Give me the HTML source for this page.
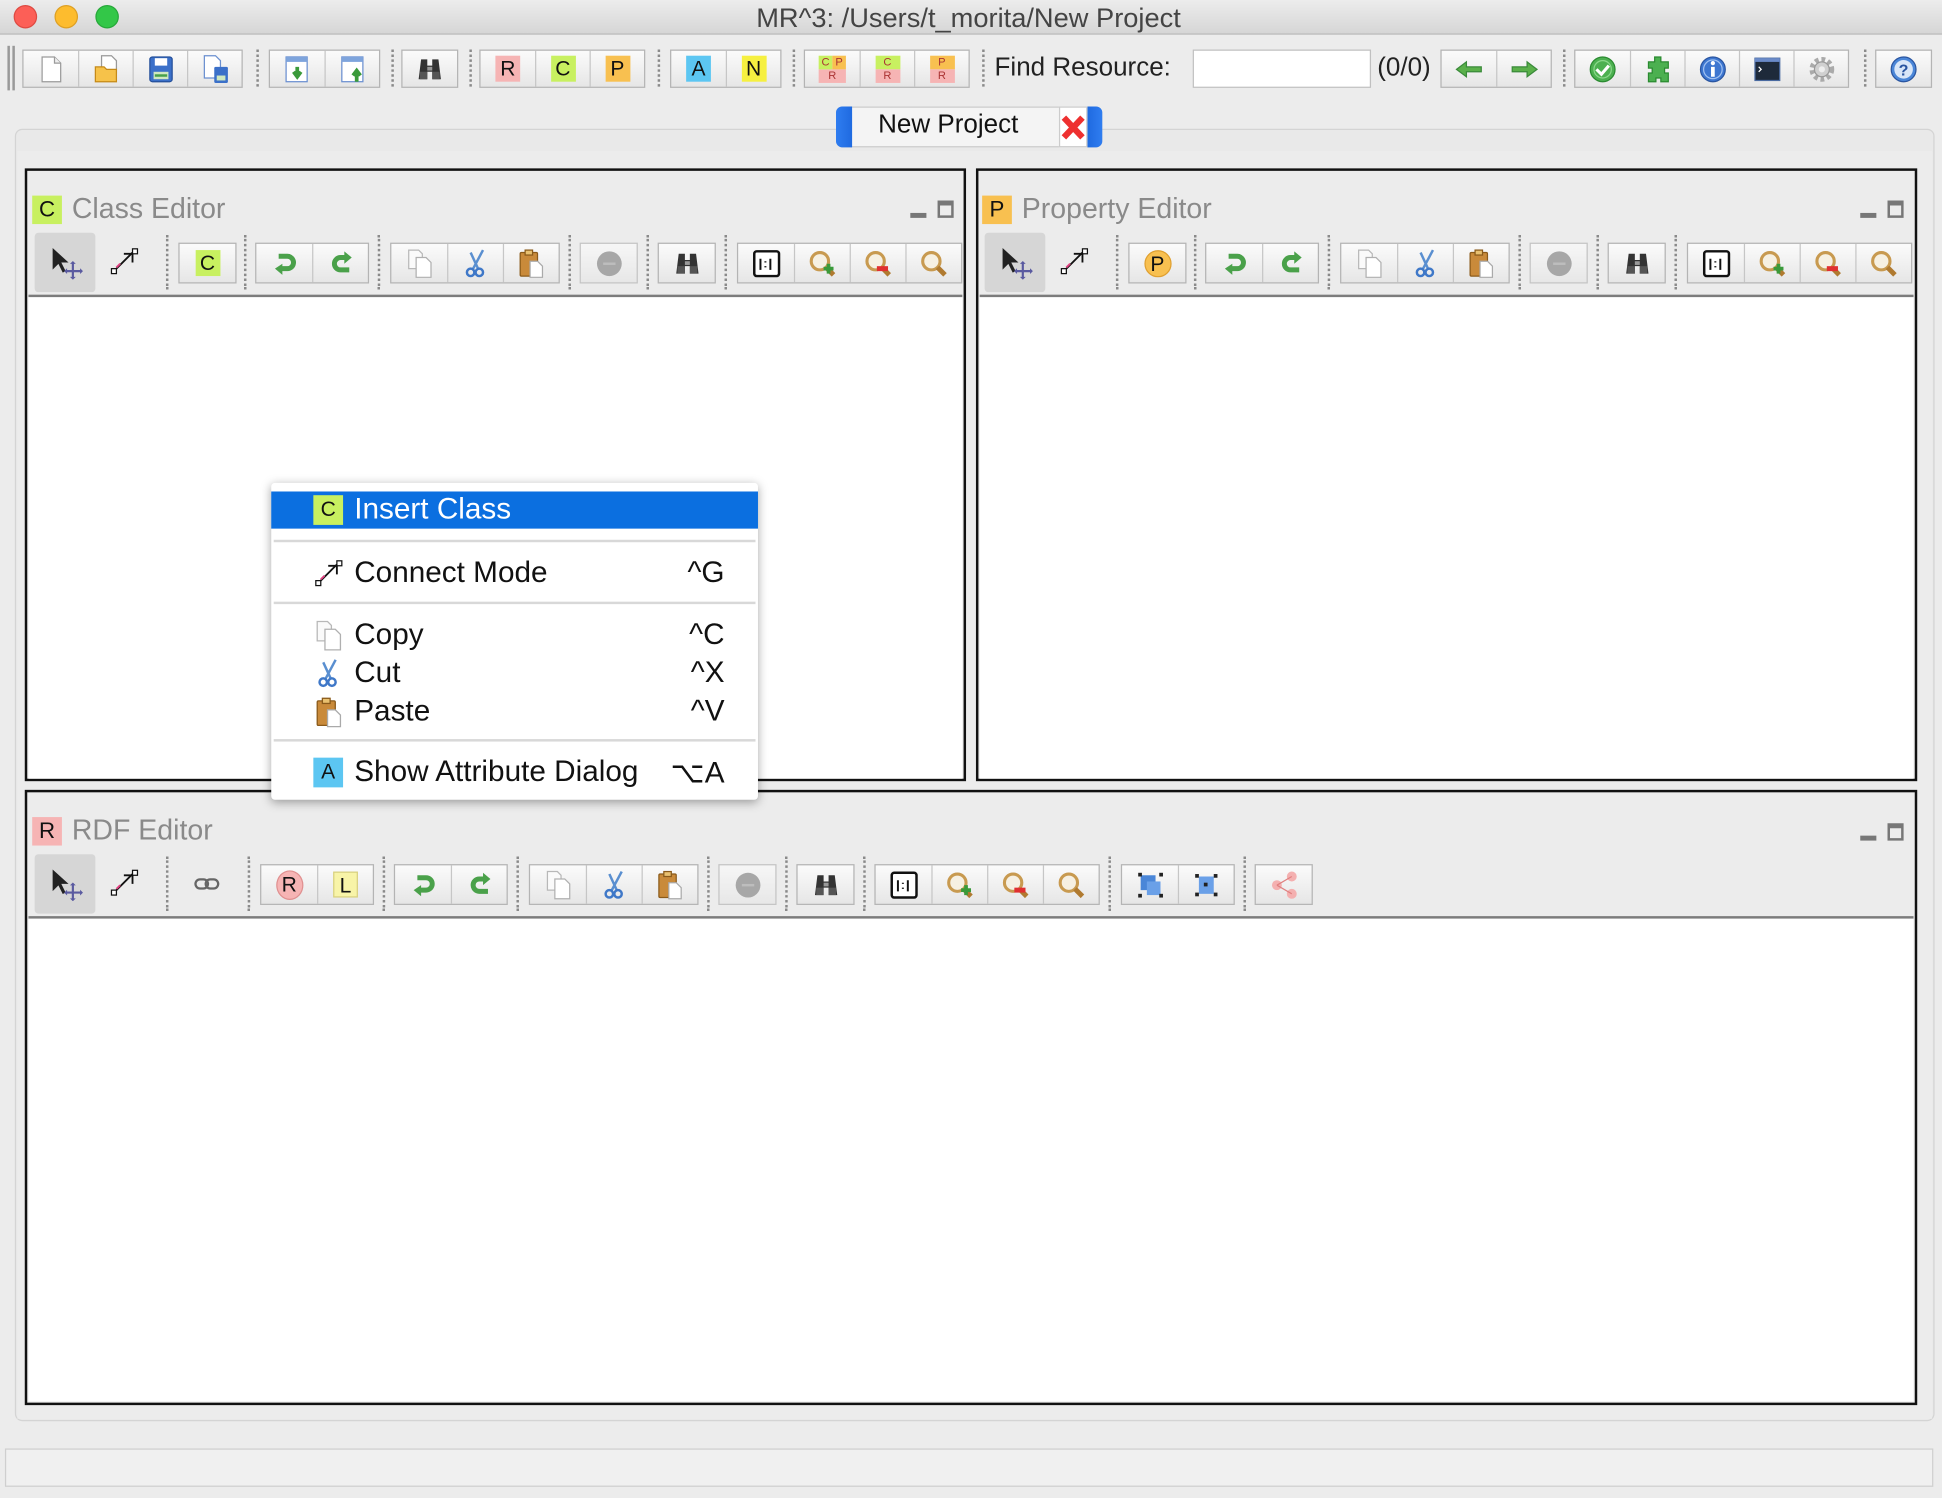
<!DOCTYPE html>
<html><head><meta charset="utf-8"><style>
*{box-sizing:border-box;margin:0;padding:0}
html,body{width:1942px;height:1498px;overflow:hidden;background:#ececec}
#root{position:absolute;left:0;top:0;width:1568px;height:1210px;transform:scale(1.23852,1.2380);transform-origin:0 0;font-family:"Liberation Sans",sans-serif;background:#ececec}
.a{position:absolute}
.grp{position:absolute;display:flex;border:1px solid #b4b4b4;background:linear-gradient(#fbfbfb,#e6e6e6)}
.grp .b{width:44px;display:flex;align-items:center;justify-content:center;border-left:1px solid #c6c6c6}
.grp .b:first-child{border-left:none}
.tb .b{height:29px}
.pt .b{height:31px;width:45px}
.sep{position:absolute;width:0;border-left:2px dotted #8a8a8a}
.badge{display:inline-block;width:20px;height:21px;font-size:17px;line-height:21px;text-align:center;color:#111}
svg{display:block}
.panel{position:absolute;border:2px solid #111;background:#ececec}
.canvas{position:absolute;background:#fff;border-top:2px solid #7c7c7c}
.ptitle{position:absolute;font-size:23px;color:#8a8a8a}
.ptitle .badge{margin-right:8px;vertical-align:1px;font-size:18px;width:24px;height:23px;line-height:23px}
.selbg{position:absolute;background:#d6d6d6;border-radius:3px;width:49px;height:48px;display:flex;align-items:center;justify-content:center}
.menu{position:absolute;left:219px;top:390px;width:393px;height:256px;background:#fff;box-shadow:0 2px 8px rgba(0,0,0,.35);border-radius:3px;font-size:24px;color:#111}
.mi{position:absolute;left:0;width:393px;height:30px}
.mi .t{position:absolute;left:67px;top:1px}
.mi .k{position:absolute;right:27px;top:1px}
.mi .ic{position:absolute;left:34px;top:3px}
.msep{position:absolute;left:2px;right:2px;height:2px;background:#d8d8d8}
</style></head><body><div id="root">
<svg width="0" height="0" style="position:absolute">
<defs>
<symbol id="doc" viewBox="0 0 24 24"><path d="M5 2h10l5 5v15H5z" fill="#fff" stroke="#9a9a9a"/><path d="M15 2v5h5" fill="#eee" stroke="#9a9a9a"/></symbol>
<symbol id="open" viewBox="0 0 24 24"><path d="M8 1h8l4 4v10H8z" fill="#fff" stroke="#999"/><path d="M3 10h7l2 2h8v10H3z" fill="#f6c24a" stroke="#c58a18"/></symbol>
<symbol id="save" viewBox="0 0 24 24"><rect x="3" y="2" width="18" height="20" rx="2" fill="#3b70c9" stroke="#244f9a"/><rect x="7" y="3" width="10" height="6" fill="#fff"/><rect x="6" y="14" width="12" height="6" fill="#cfe8c0"/><rect x="7" y="16" width="10" height="2" fill="#46a04a"/></symbol>
<symbol id="saveas" viewBox="0 0 24 24"><path d="M3 1h9l4 4v14H3z" fill="#fff" stroke="#6a8fd0"/><rect x="11" y="10" width="11" height="13" rx="1" fill="#3b70c9"/><rect x="13" y="17" width="7" height="4" fill="#cfe8c0"/></symbol>
<symbol id="imp" viewBox="0 0 24 24"><rect x="3" y="2" width="17" height="20" fill="#fff" stroke="#6a8fd0"/><rect x="3" y="2" width="17" height="4" fill="#7ea4dc"/><path d="M12 10v7M9 14l3 4 3-4" stroke="#3a9a3a" stroke-width="3" fill="none"/></symbol>
<symbol id="exp" viewBox="0 0 24 24"><rect x="3" y="2" width="17" height="20" fill="#fff" stroke="#6a8fd0"/><rect x="3" y="2" width="17" height="4" fill="#7ea4dc"/><path d="M15 22v-8M12 17l3-4 3 4" stroke="#3a9a3a" stroke-width="3" fill="none"/></symbol>
<symbol id="bino" viewBox="0 0 24 24"><path d="M5 4h5v5h4V4h5l2 16h-7v-6h-4v6H3z" fill="#333"/><rect x="4" y="14" width="6" height="6" fill="#555"/><rect x="14" y="14" width="6" height="6" fill="#555"/><rect x="10" y="10" width="4" height="3" fill="#999"/></symbol>
<symbol id="undo" viewBox="0 0 24 24"><path d="M7 6h7a5 5 0 0 1 0 10H9" fill="none" stroke="#4aa14a" stroke-width="4"/><path d="M10 12l-6 4 6 5z" fill="#4aa14a"/></symbol>
<symbol id="redo" viewBox="0 0 24 24"><path d="M18 7h-6a5 5 0 0 0 0 10h7" fill="none" stroke="#4aa14a" stroke-width="4"/><path d="M15 2l6 5-6 5z" fill="#4aa14a"/></symbol>
<symbol id="copy" viewBox="0 0 24 24"><path d="M3 1h8l3 3v12H3z" fill="#fafafa" stroke="#b8b8b8"/><path d="M9 7h8l4 4v12H9z" fill="#fff" stroke="#b0b0b0"/></symbol>
<symbol id="cut" viewBox="0 0 24 24"><path d="M10 16L18 1M14 16L8 3" stroke="#5a8fd0" stroke-width="2"/><circle cx="8" cy="19" r="3" fill="none" stroke="#3f78c8" stroke-width="2"/><circle cx="15" cy="19" r="3" fill="none" stroke="#3f78c8" stroke-width="2"/></symbol>
<symbol id="paste" viewBox="0 0 24 24"><rect x="3" y="3" width="14" height="19" rx="1" fill="#c98a3a" stroke="#8a5a1a"/><rect x="7" y="1" width="6" height="4" fill="#e8c070" stroke="#8a5a1a"/><path d="M11 10h6l4 4v9H11z" fill="#fff" stroke="#aaa"/></symbol>
<symbol id="del" viewBox="0 0 24 24"><circle cx="12" cy="12" r="10" fill="#8a8a8a"/><rect x="7" y="11" width="10" height="2" fill="#aaa"/></symbol>
<symbol id="zin" viewBox="0 0 24 24"><circle cx="10" cy="10" r="7" fill="#f6f0e2" stroke="#c89a50" stroke-width="2.5"/><path d="M15 15l6 6" stroke="#b07a30" stroke-width="4"/><path d="M13 16h8M17 12v8" stroke="#3a9a3a" stroke-width="3"/></symbol>
<symbol id="zout" viewBox="0 0 24 24"><circle cx="10" cy="10" r="7" fill="#f6f0e2" stroke="#c89a50" stroke-width="2.5"/><path d="M15 15l6 6" stroke="#b07a30" stroke-width="4"/><rect x="11" y="14" width="9" height="4" fill="#e03030"/></symbol>
<symbol id="zoom" viewBox="0 0 24 24"><circle cx="10" cy="10" r="7" fill="#f6f0e2" stroke="#c89a50" stroke-width="2.5"/><path d="M15 15l6 6" stroke="#b07a30" stroke-width="4"/></symbol>
<symbol id="sel" viewBox="0 0 24 24"><path d="M3 2v15l4-4 3 6 2-1-3-6h5z" fill="#222"/><path d="M17 12v11M12 18h11" stroke="#5a5aa0" stroke-width="1.5"/><path d="M17 11l-2 2h4zM17 24l-2-2h4zM11 18l2-2v4zM24 18l-2-2v4z" fill="#5a5aa0"/></symbol>
<symbol id="conn" viewBox="0 0 24 24"><path d="M4 20L19 5" stroke="#111" stroke-width="1.5"/><path d="M12 6h7v7" fill="none" stroke="#111" stroke-width="1.5"/><rect x="2" y="18" width="4" height="4" fill="#fff" stroke="#111"/><rect x="19" y="2" width="4" height="4" fill="#fff" stroke="#111"/><path d="M6 17l3-3" stroke="#e04080" stroke-width="1.5"/></symbol>
<symbol id="one" viewBox="0 0 24 24"><rect x="2" y="2" width="20" height="20" rx="2" fill="#fff" stroke="#111" stroke-width="2"/><path d="M7 8v9M15 8v9M11 10v1M11 14v1" stroke="#111" stroke-width="1.6"/></symbol>
<symbol id="larr" viewBox="0 0 24 24"><path d="M2 12l8-6v4h12v4H10v4z" fill="#5ab04a" stroke="#3a8a3a"/></symbol>
<symbol id="rarr" viewBox="0 0 24 24"><path d="M22 12l-8-6v4H2v4h12v4z" fill="#5ab04a" stroke="#3a8a3a"/></symbol>
<symbol id="chk" viewBox="0 0 24 24"><circle cx="12" cy="12" r="10" fill="#4cb050" stroke="#2a8a30"/><circle cx="12" cy="12" r="7" fill="none" stroke="#8ad88a"/><path d="M7 12l4 4 6-7" stroke="#fff" stroke-width="2.5" fill="none"/></symbol>
<symbol id="puz" viewBox="0 0 24 24"><path d="M9 2h5v4h6v5h-3v4h3v7h-6v-3h-4v3H4v-7h3v-4H4V6h5z" fill="#4cb050" stroke="#2a8a30"/></symbol>
<symbol id="info" viewBox="0 0 24 24"><circle cx="12" cy="12" r="10" fill="#3d76d0" stroke="#2a55a0"/><circle cx="12" cy="12" r="7.5" fill="none" stroke="#9fc0f0"/><rect x="10.5" y="10" width="3" height="8" fill="#fff"/><circle cx="12" cy="7" r="1.7" fill="#fff"/></symbol>
<symbol id="term" viewBox="0 0 24 24"><rect x="2" y="3" width="20" height="18" fill="#1e2a3a" stroke="#4a6aa0"/><rect x="2" y="3" width="20" height="3" fill="#6a8ac8"/><path d="M5 10l2 2-2 2" stroke="#fff" fill="none"/></symbol>
<symbol id="gear" viewBox="0 0 24 24"><circle cx="12" cy="12" r="8" fill="none" stroke="#aaa" stroke-width="4" stroke-dasharray="3 2.3"/><circle cx="12" cy="12" r="6" fill="#d0d0d0" stroke="#999"/><circle cx="12" cy="12" r="2.5" fill="#eee"/></symbol>
<symbol id="help" viewBox="0 0 24 24"><circle cx="12" cy="12" r="10" fill="#4a86d8" stroke="#2a55a0"/><circle cx="12" cy="12" r="7.5" fill="#d8e6f8"/><text x="12" y="17" font-size="13" font-weight="bold" text-anchor="middle" fill="#2a55a0" font-family="Liberation Sans">?</text></symbol>
<symbol id="link" viewBox="0 0 24 24"><rect x="2" y="8" width="11" height="8" rx="4" fill="none" stroke="#666" stroke-width="2"/><rect x="11" y="8" width="11" height="8" rx="4" fill="none" stroke="#666" stroke-width="2"/></symbol>
<symbol id="grp1" viewBox="0 0 24 24"><rect x="4" y="4" width="12" height="12" fill="#4a86d8"/><rect x="9" y="9" width="11" height="11" fill="#6aa0e8"/><rect x="2" y="2" width="3" height="3" fill="#222"/><rect x="19" y="2" width="3" height="3" fill="#222"/><rect x="2" y="19" width="3" height="3" fill="#222"/><rect x="19" y="19" width="3" height="3" fill="#222"/></symbol>
<symbol id="grp2" viewBox="0 0 24 24"><rect x="6" y="5" width="12" height="14" fill="#6aa0e8"/><rect x="3" y="3" width="3" height="3" fill="#222"/><rect x="18" y="3" width="3" height="3" fill="#222"/><rect x="3" y="18" width="3" height="3" fill="#222"/><rect x="18" y="18" width="3" height="3" fill="#222"/><rect x="10" y="10" width="3" height="3" fill="#222"/></symbol>
<symbol id="tree" viewBox="0 0 24 24"><circle cx="6" cy="12" r="4" fill="#f4b0b0"/><circle cx="18" cy="5" r="4" fill="#f4b0b0"/><circle cx="18" cy="19" r="4" fill="#f4b0b0"/><path d="M6 12L18 5M6 12l12 7" stroke="#e08080"/></symbol>
</defs></svg>

<div class="a" style="left:0;top:0;width:1568px;height:28px;background:linear-gradient(#ececec,#d6d6d6);border-bottom:1px solid #b8b8b8"></div>
<div class="a" style="left:11px;top:4px;width:19px;height:19px;border-radius:50%;background:#fc5f57;border:1px solid #de4a42"></div>
<div class="a" style="left:44px;top:4px;width:19px;height:19px;border-radius:50%;background:#fdbc2e;border:1px solid #dea024"></div>
<div class="a" style="left:77px;top:4px;width:19px;height:19px;border-radius:50%;background:#33c748;border:1px solid #27a83a"></div>
<div class="a" style="left:0;top:2px;width:1564px;text-align:center;font-size:22px;color:#444">MR^3: /Users/t_morita/New Project</div>

<div class="a" style="left:6px;top:37px;width:2px;height:36px;background:#999"></div>
<div class="a" style="left:10px;top:37px;width:2px;height:36px;background:#999"></div>
<div class="grp tb" style="left:18px;top:40px"><div class="b"><svg width="24" height="24"><use href="#doc"/></svg></div><div class="b"><svg width="24" height="24"><use href="#open"/></svg></div><div class="b"><svg width="24" height="24"><use href="#save"/></svg></div><div class="b"><svg width="24" height="24"><use href="#saveas"/></svg></div></div>
<div class="sep" style="left:207px;top:40px;height:30px"></div>
<div class="grp tb" style="left:217px;top:40px"><div class="b"><svg width="24" height="24"><use href="#imp"/></svg></div><div class="b"><svg width="24" height="24"><use href="#exp"/></svg></div></div>
<div class="sep" style="left:316px;top:40px;height:30px"></div>
<div class="grp tb" style="left:324px;top:40px"><div class="b"><svg width="24" height="24"><use href="#bino"/></svg></div></div>
<div class="sep" style="left:379px;top:40px;height:30px"></div>
<div class="grp tb" style="left:387px;top:40px"><div class="b"><span class="badge" style="background:#f6b4b4">R</span></div><div class="b"><span class="badge" style="background:#c8f060">C</span></div><div class="b"><span class="badge" style="background:#f8c050">P</span></div></div>
<div class="sep" style="left:531px;top:40px;height:30px"></div>
<div class="grp tb" style="left:541px;top:40px"><div class="b"><span class="badge" style="background:#5cc6f2">A</span></div><div class="b"><span class="badge" style="background:#f6f040">N</span></div></div>
<div class="sep" style="left:640px;top:40px;height:30px"></div>
<div class="grp tb" style="left:649px;top:40px">
<div class="b"><div style="width:22px;height:22px;font-size:9px;line-height:11px;text-align:center;color:#a33"><div style="display:flex"><span style="background:#c8f060;width:11px">C</span><span style="background:#f8c050;width:11px">P</span></div><div style="background:#f6b4b4">R</div></div></div>
<div class="b"><div style="width:20px;height:22px;font-size:9px;line-height:11px;text-align:center;color:#a33"><div style="background:#c8f060">C</div><div style="background:#f6b4b4">R</div></div></div>
<div class="b"><div style="width:20px;height:22px;font-size:9px;line-height:11px;text-align:center;color:#a33"><div style="background:#f8c050">P</div><div style="background:#f6b4b4">R</div></div></div></div>
<div class="sep" style="left:793px;top:40px;height:30px"></div>
<div class="a" style="left:803px;top:43px;font-size:21px;color:#222">Find Resource:</div>
<div class="a" style="left:963px;top:40px;width:144px;height:31px;background:#fff;border:1px solid #c0c0c0"></div>
<div class="a" style="left:1112px;top:43px;font-size:21px;color:#222">(0/0)</div>
<div class="grp tb" style="left:1163px;top:40px"><div class="b"><svg width="26" height="24"><use href="#larr"/></svg></div><div class="b"><svg width="26" height="24"><use href="#rarr"/></svg></div></div>
<div class="sep" style="left:1262px;top:40px;height:30px"></div>
<div class="grp tb" style="left:1271px;top:40px"><div class="b"><svg width="24" height="24"><use href="#chk"/></svg></div><div class="b"><svg width="24" height="24"><use href="#puz"/></svg></div><div class="b"><svg width="24" height="24"><use href="#info"/></svg></div><div class="b"><svg width="24" height="24"><use href="#term"/></svg></div><div class="b"><svg width="24" height="24"><use href="#gear"/></svg></div></div>
<div class="sep" style="left:1505px;top:40px;height:30px"></div>
<div class="grp tb" style="left:1514px;top:40px"><div class="b"><svg width="24" height="24"><use href="#help"/></svg></div></div>

<div class="a" style="left:12px;top:104px;width:1550px;height:1044px;border:1px solid #d4d4d4;border-radius:6px;background:#e9e9e9"></div>
<div class="a" style="left:14px;top:122px;width:1546px;height:1024px;background:#ececec"></div>
<div class="a" style="left:675px;top:86px;width:215px;height:33px;background:#f4f4f4;border:1px solid #ccc;border-radius:5px"></div>
<div class="a" style="left:675px;top:86px;width:13px;height:33px;background:linear-gradient(90deg,#2f7df0,#1f6ae0);border-radius:5px 0 0 5px"></div>
<div class="a" style="left:878px;top:86px;width:12px;height:33px;background:linear-gradient(90deg,#1f6ae0,#2f7df0);border-radius:0 5px 5px 0"></div>
<div class="a" style="left:709px;top:89px;font-size:21px;color:#111">New Project</div>
<div class="a" style="left:855px;top:86px;width:23px;height:33px;background:#fff;border:1px solid #ccc"></div>
<svg class="a" style="left:856px;top:92px" width="21" height="22"><path d="M3 3l15 16M18 3L3 19" stroke="#ee3030" stroke-width="5"/></svg>

<div class="panel" style="left:20px;top:136px;width:760px;height:495px"></div>
<div class="ptitle" style="left:26px;top:155px"><span class="badge" style="background:#c8f060">C</span>Class Editor</div>
<div class="a" style="left:735px;top:172px;width:13px;height:4px;background:#777"></div>
<div class="a" style="left:757px;top:162px;width:13px;height:14px;border:2px solid #777;border-top-width:4px"></div>
<div class="selbg" style="left:28px;top:188px"><svg width="28" height="28"><use href="#sel"/></svg></div>
<svg class="a" style="left:88px;top:199px" width="24" height="24"><use href="#conn"/></svg>
<div class="sep" style="left:134px;top:190px;height:44px"></div>
<div class="grp pt" style="left:144px;top:196px"><div class="b"><span class="badge" style="background:#c8f060">C</span></div></div>
<div class="sep" style="left:197px;top:190px;height:44px"></div>
<div class="grp pt" style="left:206px;top:196px"><div class="b"><svg width="24" height="24"><use href="#undo"/></svg></div><div class="b"><svg width="24" height="24"><use href="#redo"/></svg></div></div>
<div class="sep" style="left:305px;top:190px;height:44px"></div>
<div class="grp pt" style="left:315px;top:196px"><div class="b"><svg width="24" height="24"><use href="#copy"/></svg></div><div class="b"><svg width="24" height="24"><use href="#cut"/></svg></div><div class="b"><svg width="24" height="24"><use href="#paste"/></svg></div></div>
<div class="sep" style="left:459px;top:190px;height:44px"></div>
<div class="grp pt" style="left:468px;top:196px;opacity:.7"><div class="b"><svg width="24" height="24"><use href="#del"/></svg></div></div>
<div class="sep" style="left:522px;top:190px;height:44px"></div>
<div class="grp pt" style="left:531px;top:196px"><div class="b"><svg width="24" height="24"><use href="#bino"/></svg></div></div>
<div class="sep" style="left:585px;top:190px;height:44px"></div>
<div class="grp pt" style="left:595px;top:196px"><div class="b"><svg width="24" height="24"><use href="#one"/></svg></div><div class="b"><svg width="24" height="24"><use href="#zin"/></svg></div><div class="b"><svg width="24" height="24"><use href="#zout"/></svg></div><div class="b"><svg width="24" height="24"><use href="#zoom"/></svg></div></div>
<div class="canvas" style="left:23px;top:238px;width:754px;height:391px"></div>

<div class="panel" style="left:788px;top:136px;width:760px;height:495px"></div>
<div class="ptitle" style="left:793px;top:155px"><span class="badge" style="background:#f8c050">P</span>Property Editor</div>
<div class="a" style="left:1502px;top:172px;width:13px;height:4px;background:#777"></div>
<div class="a" style="left:1524px;top:162px;width:13px;height:14px;border:2px solid #777;border-top-width:4px"></div>
<div class="selbg" style="left:795px;top:188px"><svg width="28" height="28"><use href="#sel"/></svg></div>
<svg class="a" style="left:855px;top:199px" width="24" height="24"><use href="#conn"/></svg>
<div class="sep" style="left:901px;top:190px;height:44px"></div>
<div class="grp pt" style="left:911px;top:196px"><div class="b"><span class="badge" style="background:#f8c050;border-radius:50%;width:22px;height:22px;line-height:22px;border:1px solid #e0a030">P</span></div></div>
<div class="sep" style="left:964px;top:190px;height:44px"></div>
<div class="grp pt" style="left:973px;top:196px"><div class="b"><svg width="24" height="24"><use href="#undo"/></svg></div><div class="b"><svg width="24" height="24"><use href="#redo"/></svg></div></div>
<div class="sep" style="left:1072px;top:190px;height:44px"></div>
<div class="grp pt" style="left:1082px;top:196px"><div class="b"><svg width="24" height="24"><use href="#copy"/></svg></div><div class="b"><svg width="24" height="24"><use href="#cut"/></svg></div><div class="b"><svg width="24" height="24"><use href="#paste"/></svg></div></div>
<div class="sep" style="left:1226px;top:190px;height:44px"></div>
<div class="grp pt" style="left:1235px;top:196px;opacity:.7"><div class="b"><svg width="24" height="24"><use href="#del"/></svg></div></div>
<div class="sep" style="left:1289px;top:190px;height:44px"></div>
<div class="grp pt" style="left:1298px;top:196px"><div class="b"><svg width="24" height="24"><use href="#bino"/></svg></div></div>
<div class="sep" style="left:1352px;top:190px;height:44px"></div>
<div class="grp pt" style="left:1362px;top:196px"><div class="b"><svg width="24" height="24"><use href="#one"/></svg></div><div class="b"><svg width="24" height="24"><use href="#zin"/></svg></div><div class="b"><svg width="24" height="24"><use href="#zout"/></svg></div><div class="b"><svg width="24" height="24"><use href="#zoom"/></svg></div></div>
<div class="canvas" style="left:791px;top:238px;width:754px;height:391px"></div>

<div class="panel" style="left:20px;top:638px;width:1528px;height:497px"></div>
<div class="ptitle" style="left:26px;top:657px"><span class="badge" style="background:#f6b4b4">R</span>RDF Editor</div>
<div class="a" style="left:1502px;top:675px;width:13px;height:4px;background:#777"></div>
<div class="a" style="left:1524px;top:665px;width:13px;height:14px;border:2px solid #777;border-top-width:4px"></div>
<div class="selbg" style="left:28px;top:690px"><svg width="28" height="28"><use href="#sel"/></svg></div>
<svg class="a" style="left:88px;top:701px" width="24" height="24"><use href="#conn"/></svg>
<div class="sep" style="left:134px;top:692px;height:44px"></div>
<svg class="a" style="left:156px;top:703px" width="22" height="22"><use href="#link"/></svg>
<div class="sep" style="left:200px;top:692px;height:44px"></div>
<div class="grp pt" style="left:210px;top:698px"><div class="b"><span class="badge" style="background:#f6b4b4;border-radius:50%;width:22px;height:24px;border:1px solid #e09090">R</span></div><div class="b"><span class="badge" style="background:#f8f4a8;border:1px solid #d8d080">L</span></div></div>
<div class="sep" style="left:309px;top:692px;height:44px"></div>
<div class="grp pt" style="left:318px;top:698px"><div class="b"><svg width="24" height="24"><use href="#undo"/></svg></div><div class="b"><svg width="24" height="24"><use href="#redo"/></svg></div></div>
<div class="sep" style="left:417px;top:692px;height:44px"></div>
<div class="grp pt" style="left:427px;top:698px"><div class="b"><svg width="24" height="24"><use href="#copy"/></svg></div><div class="b"><svg width="24" height="24"><use href="#cut"/></svg></div><div class="b"><svg width="24" height="24"><use href="#paste"/></svg></div></div>
<div class="sep" style="left:571px;top:692px;height:44px"></div>
<div class="grp pt" style="left:580px;top:698px;opacity:.7"><div class="b"><svg width="24" height="24"><use href="#del"/></svg></div></div>
<div class="sep" style="left:634px;top:692px;height:44px"></div>
<div class="grp pt" style="left:643px;top:698px"><div class="b"><svg width="24" height="24"><use href="#bino"/></svg></div></div>
<div class="sep" style="left:697px;top:692px;height:44px"></div>
<div class="grp pt" style="left:706px;top:698px"><div class="b"><svg width="24" height="24"><use href="#one"/></svg></div><div class="b"><svg width="24" height="24"><use href="#zin"/></svg></div><div class="b"><svg width="24" height="24"><use href="#zout"/></svg></div><div class="b"><svg width="24" height="24"><use href="#zoom"/></svg></div></div>
<div class="sep" style="left:895px;top:692px;height:44px"></div>
<div class="grp pt" style="left:905px;top:698px"><div class="b"><svg width="24" height="24"><use href="#grp1"/></svg></div><div class="b"><svg width="24" height="24"><use href="#grp2"/></svg></div></div>
<div class="sep" style="left:1004px;top:692px;height:44px"></div>
<div class="grp pt" style="left:1013px;top:698px"><div class="b"><svg width="24" height="24"><use href="#tree"/></svg></div></div>
<div class="canvas" style="left:23px;top:740px;width:1522px;height:392px"></div>

<div class="a" style="left:4px;top:1170px;width:1557px;height:31px;background:#f0f0f0;border:1px solid #cfcfcf"></div>

<div class="menu">
<div class="mi" style="top:7px;background:#0b6fe0;color:#fff"><span class="ic badge" style="background:#c8f060;width:24px;height:24px;line-height:24px;font-size:17px;top:3px;color:#111">C</span><span class="t">Insert Class</span></div>
<div class="msep" style="top:46px"></div>
<div class="mi" style="top:58px"><svg class="ic" width="24" height="24"><use href="#conn"/></svg><span class="t">Connect Mode</span><span class="k">^G</span></div>
<div class="msep" style="top:96px"></div>
<div class="mi" style="top:108px"><svg class="ic" width="25" height="25"><use href="#copy"/></svg><span class="t">Copy</span><span class="k">^C</span></div>
<div class="mi" style="top:139px"><svg class="ic" width="24" height="24"><use href="#cut"/></svg><span class="t">Cut</span><span class="k">^X</span></div>
<div class="mi" style="top:170px"><svg class="ic" width="25" height="25"><use href="#paste"/></svg><span class="t">Paste</span><span class="k">^V</span></div>
<div class="msep" style="top:207px"></div>
<div class="mi" style="top:219px"><span class="ic badge" style="background:#5cc6f2;width:24px;height:24px;line-height:24px;font-size:17px;top:3px">A</span><span class="t">Show Attribute Dialog</span><span class="k">⌥A</span></div>
</div>
</div></body></html>
